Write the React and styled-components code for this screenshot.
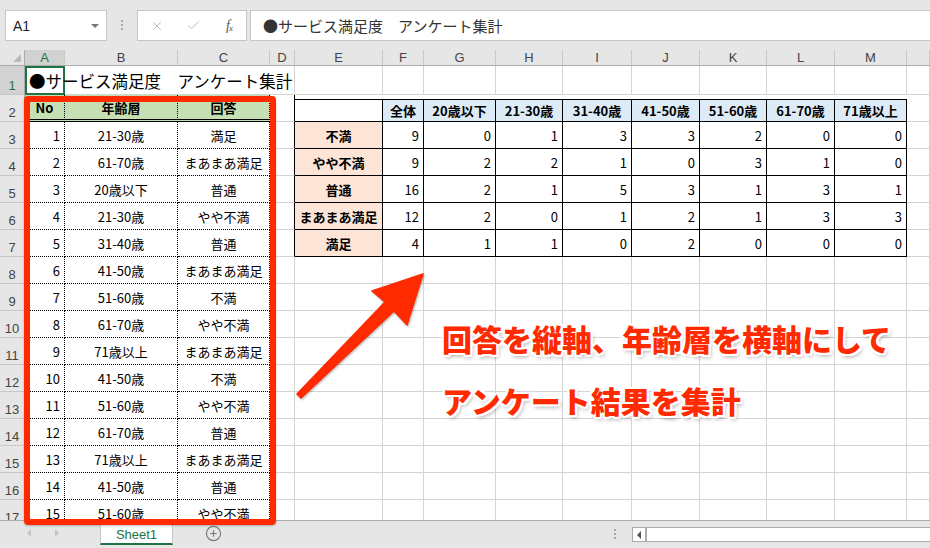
import React from 'react';
import styled, { createGlobalStyle } from 'styled-components';
import { X, Check, CirclePlus } from 'lucide-react';

const GREEN = '#217346';
const RED = '#ff2a00';
const GRID = '#d4d4d4';
const JP = "'Noto Sans CJK JP', 'Liberation Sans', sans-serif";
const UI = "'Liberation Sans', Arial, sans-serif";

// row header + A..M, N takes the rest (its label falls outside the window)
const colWidths = [25, 40, 113, 92, 25, 88, 41, 72, 67, 69, 68, 67, 68, 72];
const letters = ['A', 'B', 'C', 'D', 'E', 'F', 'G', 'H', 'I', 'J', 'K', 'L', 'M', ''];

const survey = [
  ['21-30歳', '満足'],
  ['61-70歳', 'まあまあ満足'],
  ['20歳以下', '普通'],
  ['21-30歳', 'やや不満'],
  ['31-40歳', '普通'],
  ['41-50歳', 'まあまあ満足'],
  ['51-60歳', '不満'],
  ['61-70歳', 'やや不満'],
  ['71歳以上', 'まあまあ満足'],
  ['41-50歳', '不満'],
  ['51-60歳', 'やや不満'],
  ['61-70歳', '普通'],
  ['71歳以上', 'まあまあ満足'],
  ['41-50歳', '普通'],
  ['51-60歳', 'やや不満'],
];

const ageCols = ['全体', '20歳以下', '21-30歳', '31-40歳', '41-50歳', '51-60歳', '61-70歳', '71歳以上'];

const summary = [
  ['不満', [9, 0, 1, 3, 3, 2, 0, 0]],
  ['やや不満', [9, 2, 2, 1, 0, 3, 1, 0]],
  ['普通', [16, 2, 1, 5, 3, 1, 3, 1]],
  ['まあまあ満足', [12, 2, 0, 1, 2, 1, 3, 3]],
  ['満足', [4, 1, 1, 0, 2, 0, 0, 0]],
];

const Global = createGlobalStyle`
  html, body { margin: 0; padding: 0; background: #e6e6e6; }
  * { box-sizing: border-box; }
`;

const Window = styled.div`
  position: relative;
  width: 930px;
  height: 548px;
  overflow: hidden;
  background: #e6e6e6;
  font-family: ${UI};
`;

/* ---------- formula bar ---------- */
const Toolbar = styled.div`
  height: 50px;
  display: flex;
  align-items: flex-start;
  padding: 10px 0 0 5px;
`;

const NameBox = styled.div`
  width: 102px;
  height: 31px;
  background: #fff;
  border: 1px solid #c6c6c6;
  display: flex;
  align-items: center;
  justify-content: space-between;
  padding: 0 7px 0 7px;
  font-size: 14px;
  color: #222;
`;

const DropTri = styled.span`
  width: 0;
  height: 0;
  border-left: 4px solid transparent;
  border-right: 4px solid transparent;
  border-top: 4px solid #777;
`;

const VDots = styled.div`
  width: ${({ $w }) => $w}px;
  height: ${({ $h }) => $h}px;
  display: flex;
  flex-direction: column;
  align-items: center;
  justify-content: center;
  gap: 2px;
  margin-top: ${({ $top }) => $top}px;
  margin-left: ${({ $push }) => ($push ? 'auto' : '0')};
  span {
    width: 2px;
    height: 2px;
    background: #a8a8a8;
  }
`;

const FxBox = styled.div`
  width: 110px;
  height: 31px;
  background: #fff;
  border: 1px solid #c6c6c6;
  display: grid;
  grid-template-columns: 37px 37px 1fr;
  align-items: center;
  justify-items: center;
  margin-right: 3px;
`;

const Fx = styled.span`
  font-family: 'Liberation Serif', serif;
  font-style: italic;
  font-size: 14px;
  color: #555;
  letter-spacing: -1px;
  sub {
    font-size: 9px;
    vertical-align: -1px;
  }
`;

const FormulaBox = styled.div`
  flex: 1;
  height: 31px;
  background: #fff;
  border: 1px solid #c6c6c6;
  border-right: none;
  display: flex;
  align-items: center;
  padding-left: 12px;
  font-family: ${JP};
  font-size: 15px;
  color: #333;
  white-space: nowrap;
`;

/* ---------- sheet grid ---------- */
const Sheet = styled.div`
  height: 470px;
  background: #fff;
  display: grid;
  grid-template-columns: ${colWidths.map((w) => `${w}px`).join(' ')} 1fr;
  grid-template-rows: 16px 29px repeat(16, 27px);
  overflow: hidden;
`;

const Corner = styled.div`
  background: #e6e6e6;
  border-right: 1px solid #ababab;
  border-bottom: 1px solid #ababab;
  display: flex;
  align-items: flex-end;
  justify-content: flex-end;
  padding: 0 3px 3px 0;
  &::after {
    content: '';
    width: 0;
    height: 0;
    border-left: 8px solid transparent;
    border-bottom: 8px solid #b9b9b9;
  }
`;

const ColHead = styled.div`
  background: ${({ $active }) => ($active ? '#d2d2d2' : '#e6e6e6')};
  color: ${({ $active }) => ($active ? GREEN : '#444')};
  border-right: 1px solid #c8c8c8;
  border-bottom: 1px solid #ababab;
  display: flex;
  align-items: flex-end;
  justify-content: center;
  padding-bottom: 1px;
  font-size: 13px;
  line-height: 13px;
`;

const RowHead = styled.div`
  background: ${({ $active }) => ($active ? '#d2d2d2' : '#e6e6e6')};
  color: ${({ $active }) => ($active ? GREEN : '#444')};
  border-right: 1px solid #ababab;
  border-bottom: 1px solid #c8c8c8;
  display: flex;
  align-items: flex-end;
  justify-content: center;
  padding-bottom: 1px;
  font-size: 13px;
  line-height: 14px;
  overflow: hidden;
`;

const Cell = styled.div`
  min-width: 0;
  display: flex;
  align-items: center;
  justify-content: ${({ $align }) =>
    $align === 'right' ? 'flex-end' : $align === 'center' ? 'center' : 'flex-start'};
  padding: 0 ${({ $align }) => ($align === 'right' ? '4px' : '2px')} 0 2px;
  background: ${({ $bg }) => $bg || '#fff'};
  border-right: ${({ $br }) => $br || `1px solid ${GRID}`};
  border-bottom: ${({ $bb }) => $bb || `1px solid ${GRID}`};
  border-top: ${({ $inset }) => ($inset ? '1px solid #000' : 'none')};
  margin-top: ${({ $inset }) => ($inset ? '4px' : '0')};
  font-family: ${JP};
  font-size: 13px;
  font-weight: ${({ $bold }) => ($bold ? 700 : 400)};
  color: #000;
  white-space: nowrap;
  overflow: hidden;
`;

const TitleCell = styled(Cell)`
  position: relative;
  z-index: 1;
  overflow: visible;
  border: none;
  box-shadow: inset 0 0 0 2px ${GREEN};
  padding-left: 4px;
  font-size: 16.5px;
`;

/* ---------- sheet tabs ---------- */
const TabBar = styled.div`
  height: 28px;
  border-top: 1px solid #ababab;
  display: flex;
  align-items: flex-start;
  padding-left: 15px;
`;

const NavArrow = styled.div`
  width: 28px;
  height: 24px;
  display: flex;
  align-items: center;
  justify-content: center;
  &::after {
    content: '';
    width: 0;
    height: 0;
    border-top: 4px solid transparent;
    border-bottom: 4px solid transparent;
    ${({ $dir }) =>
      $dir === 'left' ? 'border-right: 4px solid #c4c4c4;' : 'border-left: 4px solid #c4c4c4;'}
  }
`;

const Tab = styled.div`
  width: 73px;
  height: 20px;
  margin: 4px 0 0 29px;
  background: #fff;
  border-left: 1px solid #c6c6c6;
  border-right: 1px solid #c6c6c6;
  border-bottom: 2px solid ${GREEN};
  display: flex;
  align-items: center;
  justify-content: center;
  font-size: 13px;
  color: ${GREEN};
`;

const AddSheet = styled.div`
  margin: 4px 0 0 32px;
  display: flex;
  color: #7a7a7a;
`;

const Scrollbar = styled.div`
  width: 298px;
  height: 15px;
  margin: 6px 0 0 9px;
  background: #fff;
  border: 1px solid #ababab;
  border-right: none;
  display: flex;
`;

const ScrollBtn = styled.div`
  width: 14px;
  border-right: 2px solid #ababab;
  display: flex;
  align-items: center;
  justify-content: center;
  &::after {
    content: '';
    width: 0;
    height: 0;
    border-top: 4px solid transparent;
    border-bottom: 4px solid transparent;
    border-right: 4px solid #555;
  }
`;

/* ---------- annotation overlays ---------- */
const Highlight = styled.div`
  position: absolute;
  left: 24px;
  top: 96px;
  width: 252px;
  height: 429px;
  border: 6px solid ${RED};
  border-radius: 4px;
  box-shadow: 0 1px 2px rgba(0, 0, 0, 0.25);
  pointer-events: none;
`;

const ArrowSvg = styled.svg`
  position: absolute;
  left: 0;
  top: 0;
  pointer-events: none;
  filter: drop-shadow(1px 1px 1px rgba(0, 0, 0, 0.3));
`;

const Note = styled.div`
  position: absolute;
  left: 442px;
  top: 307px;
  font-family: ${JP};
  font-weight: 900;
  font-size: 30px;
  line-height: 62px;
  color: ${RED};
  white-space: nowrap;
  text-shadow: 2px 0 0 #fff, -2px 0 0 #fff, 0 2px 0 #fff, 0 -2px 0 #fff, 2px 2px 0 #fff, -2px -2px 0 #fff,
    2px -2px 0 #fff, -2px 2px 0 #fff, 2px 3px 4px rgba(0, 0, 0, 0.35);
`;

function renderCell(r, c) {
  const key = `${r}-${c}`;

  if (r === 1) {
    if (c === 1) return <TitleCell key={key}>●サービス満足度　アンケート集計</TitleCell>;
    if (c === 2 || c === 3) return <Cell key={key} $br="none" />;
    return <Cell key={key} />;
  }

  // left data table A2:C17
  if (c <= 3) {
    const bb = r === 2 ? '3px double #000' : '1px dotted #000';
    const br = '1px dotted #000';
    if (r === 2) {
      return (
        <Cell key={key} $bg="#c6e0b4" $bold $align="center" $bb={bb} $br={br}>
          {['No', '年齢層', '回答'][c - 1]}
        </Cell>
      );
    }
    const i = r - 3;
    const text = c === 1 ? i + 1 : survey[i][c - 2];
    return (
      <Cell key={key} $align={c === 1 ? 'right' : 'center'} $bb={bb} $br={br}>
        {text}
      </Cell>
    );
  }

  // summary table E2:M7
  if (r >= 2 && r <= 7 && c >= 5 && c <= 13) {
    const line = '1px solid #000';
    if (r === 2) {
      return (
        <Cell key={key} $inset $bg={c === 5 ? '#fff' : '#ddebf7'} $bold $align="center" $bb={line} $br={line}>
          {c === 5 ? '' : ageCols[c - 6]}
        </Cell>
      );
    }
    const [label, nums] = summary[r - 3];
    if (c === 5) {
      return (
        <Cell key={key} $bg="#fce4d6" $bold $align="center" $bb={line} $br={line}>
          {label}
        </Cell>
      );
    }
    return (
      <Cell key={key} $align="right" $bb={line} $br={line}>
        {nums[c - 6]}
      </Cell>
    );
  }

  if (c === 4 && r >= 2 && r <= 7) return <Cell key={key} $br="1px solid #000" />;
  return <Cell key={key} />;
}

export default function App() {
  const cells = [<Corner key="corner" />];
  letters.forEach((l, i) => cells.push(<ColHead key={`h${i}`} $active={i === 0}>{l}</ColHead>));
  for (let r = 1; r <= 17; r++) {
    cells.push(
      <RowHead key={`r${r}`} $active={r === 1}>
        {r}
      </RowHead>
    );
    for (let c = 1; c <= 14; c++) cells.push(renderCell(r, c));
  }

  return (
    <>
      <Global />
      <Window>
        <Toolbar>
          <NameBox>
            A1
            <DropTri />
          </NameBox>
          <VDots $w={30} $h={12} $top={9}>
            <span />
            <span />
            <span />
          </VDots>
          <FxBox>
            <X size={14} color="#b4b4b4" strokeWidth={1.5} />
            <Check size={15} color="#b4b4b4" strokeWidth={1.5} />
            <Fx>
              f<sub>x</sub>
            </Fx>
          </FxBox>
          <FormulaBox>●サービス満足度　アンケート集計</FormulaBox>
        </Toolbar>

        <Sheet>{cells}</Sheet>

        <TabBar>
          <NavArrow $dir="left" />
          <NavArrow $dir="right" />
          <Tab>Sheet1</Tab>
          <AddSheet>
            <CirclePlus size={17} strokeWidth={1.6} />
          </AddSheet>
          <VDots $w={16} $h={12} $top={7} $push>
            <span />
            <span />
            <span />
          </VDots>
          <Scrollbar>
            <ScrollBtn />
          </Scrollbar>
        </TabBar>

        <Highlight />
        <ArrowSvg width="930" height="548" viewBox="0 0 930 548">
          <polygon
            points="423,274 372,291 385,302 297,394 301,398 394,311 407,325"
            fill={RED}
            stroke={RED}
            strokeWidth="1.5"
            strokeLinejoin="round"
          />
        </ArrowSvg>
        <Note>
          <div>回答を縦軸、年齢層を横軸にして</div>
          <div>アンケート結果を集計</div>
        </Note>
      </Window>
    </>
  );
}
